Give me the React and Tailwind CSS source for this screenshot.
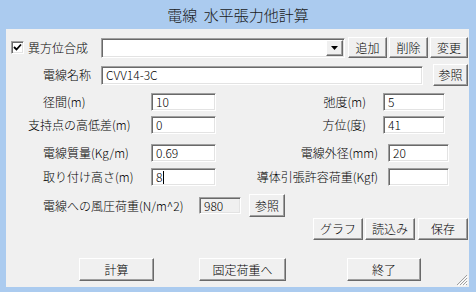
import React from "react";

const FONT = { fontFamily: '"Noto Sans CJK JP", "Noto Sans", sans-serif' };

function Btn({ className, children }) {
  return (
    <div
      className={
        "flex items-center justify-center bg-[#f0f0f0] border border-t-white border-l-white border-r-[#696969] border-b-[#696969] shadow-[inset_-1px_-1px_0_#a0a0a0] text-[12px] leading-none text-black " +
        className
      }
    >
      {children}
    </div>
  );
}

function Field({ className, children, gray, cursor }) {
  return (
    <div
      className={
        "flex items-center pl-[4px] border border-t-[#a0a0a0] border-l-[#a0a0a0] border-r-white border-b-white shadow-[inset_1px_1px_0_#696969,inset_-1px_-1px_0_#e3e3e3] text-[12px] leading-none text-black " +
        (gray ? "bg-[#f0f0f0] " : "bg-white ") +
        className
      }
    >
      <span>{children}</span>
      {cursor && <span className="ml-[1px] w-[1px] h-[13px] bg-black" />}
    </div>
  );
}

export default function App() {
  return (
    <div className="w-[476px] h-[292px] bg-[#abcbef] flex flex-col font-light" style={FONT}>
      <div className="h-[29px] flex items-center justify-center text-[15px] text-[#1a1a1a] whitespace-pre pt-[1px]">
        電線  水平張力他計算
      </div>
      <div className="relative ml-[6px] w-[463px] h-[258px] bg-[#f0f0f0] flex flex-col text-[12px] leading-none text-black">
        {/* Row 1 */}
        <div className="mt-[8px] h-[21px] flex items-center">
          <div className="ml-[5px] w-[13px] h-[13px] bg-white border border-t-[#a0a0a0] border-l-[#a0a0a0] border-r-white border-b-white shadow-[inset_1px_1px_0_#696969,inset_-1px_-1px_0_#e3e3e3] flex items-center justify-center">
            <svg width="9" height="9" viewBox="0 0 9 9">
              <path d="M1 4 L3.5 6.5 L8 1.5" stroke="#000" strokeWidth="1.8" fill="none" />
            </svg>
          </div>
          <div className="ml-[4px] w-[73px]">異方位合成</div>
          <div className="w-[244px] h-[20px] flex items-center bg-white border border-t-[#a0a0a0] border-l-[#a0a0a0] border-r-white border-b-white shadow-[inset_1px_1px_0_#696969,inset_-1px_-1px_0_#e3e3e3]">
            <div className="flex-1" />
            <div className="w-[17px] h-[16px] mr-[1px] bg-[#f0f0f0] border border-t-white border-l-white border-r-[#696969] border-b-[#696969] shadow-[inset_-1px_-1px_0_#a0a0a0] flex items-center justify-center">
              <svg width="7" height="4" viewBox="0 0 7 4">
                <path d="M0 0 H7 L3.5 4 Z" fill="#000" />
              </svg>
            </div>
          </div>
          <Btn className="ml-[3px] w-[39px] h-[21px]">追加</Btn>
          <Btn className="ml-[2px] w-[39px] h-[21px]">削除</Btn>
          <Btn className="ml-[2px] w-[38px] h-[21px]">変更</Btn>
        </div>

        {/* Row 2 */}
        <div className="mt-[6px] h-[22px] flex items-center">
          <div className="pl-[37px] w-[95px]">電線名称</div>
          <Field className="w-[322px] h-[19px]">CVV14-3C</Field>
          <Btn className="ml-[10px] w-[35px] h-[22px]">参照</Btn>
        </div>

        {/* Row 3 */}
        <div className="mt-[7px] h-[18px] flex items-center">
          <div className="pl-[37px] w-[145px]">径間(m)</div>
          <Field className="w-[65px] h-[18px]">10</Field>
          <div className="w-[167px] pr-[17px] text-right">弛度(m)</div>
          <Field className="w-[62px] h-[18px]">5</Field>
        </div>

        {/* Row 4 */}
        <div className="mt-[5px] h-[18px] flex items-center">
          <div className="pl-[22px] w-[145px]">支持点の高低差(m)</div>
          <Field className="w-[65px] h-[18px]">0</Field>
          <div className="w-[167px] pr-[17px] text-right">方位(度)</div>
          <Field className="w-[62px] h-[18px]">41</Field>
        </div>

        {/* Row 5 */}
        <div className="mt-[10px] h-[18px] flex items-center">
          <div className="pl-[37px] w-[145px]">電線質量(Kg/m)</div>
          <Field className="w-[65px] h-[18px]">0.69</Field>
          <div className="w-[172px] pr-[10px] text-right">電線外径(mm)</div>
          <Field className="w-[61px] h-[18px]">20</Field>
        </div>

        {/* Row 6 */}
        <div className="mt-[6px] h-[18px] flex items-center">
          <div className="pl-[37px] w-[145px]">取り付け高さ(m)</div>
          <Field className="w-[65px] h-[18px]" cursor>8</Field>
          <div className="w-[172px] pr-[10px] text-right">導体引張許容荷重(Kgf)</div>
          <Field className="w-[61px] h-[18px]"></Field>
        </div>

        {/* Row 7 */}
        <div className="mt-[8px] h-[23px] flex items-center">
          <div className="pl-[37px] w-[193px]">電線への風圧荷重(N/m^2)</div>
          <Field className="w-[42px] h-[17px]" gray>980</Field>
          <Btn className="ml-[8px] w-[36px] h-[23px]">参照</Btn>
        </div>

        {/* Row 8 */}
        <div className="mt-[1px] h-[22px] flex items-center">
          <Btn className="ml-[307px] w-[50px] h-[22px]">グラフ</Btn>
          <Btn className="ml-[2px] w-[50px] h-[22px]">読込み</Btn>
          <Btn className="ml-[3px] w-[50px] h-[22px]">保存</Btn>
        </div>

        {/* Row 9 */}
        <div className="mt-[18px] h-[23px] flex items-center">
          <Btn className="ml-[73px] w-[75px] h-[23px]">計算</Btn>
          <Btn className="ml-[45px] w-[87px] h-[23px]">固定荷重へ</Btn>
          <Btn className="ml-[61px] w-[74px] h-[23px]">終了</Btn>
        </div>

        {/* resize grip */}
        <svg className="absolute right-[1px] bottom-[1px]" width="12" height="12" viewBox="0 0 12 12">
          <path d="M11 1 L1 11 M11 4 L4 11 M11 7 L7 11 M11 10 L10 11" stroke="#a0a0a0" strokeWidth="1" />
          <path d="M12 2 L2 12 M12 5 L5 12 M12 8 L8 12" stroke="#ffffff" strokeWidth="1" />
        </svg>
      </div>
    </div>
  );
}
